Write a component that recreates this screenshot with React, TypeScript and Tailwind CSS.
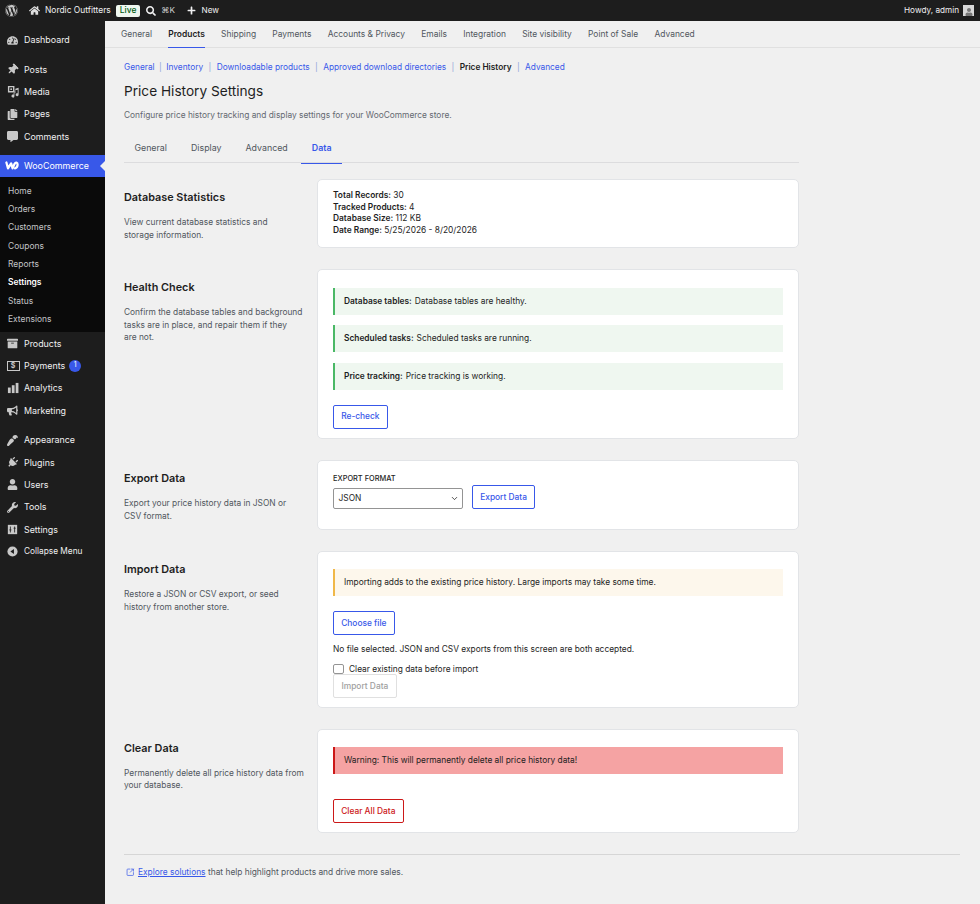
import React from 'react';
import { ChevronDown, SquareArrowOutUpRight } from 'lucide-react';
import {
  FaArchive, FaBullhorn, FaCommentAlt, FaCopy, FaHome, FaPaintBrush, FaPlug, FaPlus, FaSearch,
  FaTachometerAlt, FaThumbtack, FaUser, FaWordpress, FaWrench,
} from 'react-icons/fa';

const MediaIcon = () => (
  <svg viewBox="0 0 14 14" className="w-[13px] h-[13px]" fill="currentColor">
    <path d="M1 1h7v7H1zM2.5 2.5v4h4v-4z" fillRule="evenodd" />
    <circle cx="4.5" cy="4.5" r="1" />
    <path d="M12.5 3v7.5a1.6 1.6 0 1 1-1-1.5V5L8 6V12a1.6 1.6 0 1 1-1-1.5V9h2V4z" />
  </svg>
);

const WooIcon = () => (
  <svg viewBox="0 0 16 10" className="w-[14px] h-[9px]" fill="none" stroke="currentColor" strokeWidth="2.6" strokeLinejoin="round" strokeLinecap="round">
    <path d="M1.6 1.6 3.4 8.2 7 2.6 8.6 8.2 11 3c1-1.8 3.4-1.6 3.4.9 0 2.2-1.6 4-3 4.3" />
  </svg>
);

const PaymentsIcon = () => (
  <div className="w-[13px] h-[10px] border border-[#c8c8c8] flex items-center justify-center text-[7px] font-bold leading-none">$</div>
);

const BarsIcon = () => (
  <svg viewBox="0 0 13 13" className="w-[12px] h-[12px]" fill="currentColor">
    <rect x="1" y="6" width="3" height="6" />
    <rect x="5.2" y="3.5" width="3" height="8.5" />
    <rect x="9.4" y="1" width="3" height="11" />
  </svg>
);

const SlidersIcon = () => (
  <svg viewBox="0 0 13 13" className="w-[11px] h-[11px]">
    <rect x="1" y="1" width="11" height="11" fill="currentColor" />
    <path d="M4 3v7M2.8 7h2.4M9 3v7M7.8 5h2.4" stroke="#1d1d1d" strokeWidth="1" />
  </svg>
);

const CollapseIcon = () => (
  <svg viewBox="0 0 13 13" className="w-[11px] h-[11px]">
    <circle cx="6.5" cy="6.5" r="6" fill="currentColor" />
    <path d="M8.2 3.5v6L4 6.5z" fill="#1d1d1d" />
  </svg>
);

const MenuItem = ({ icon, label, badge, small }: { icon: React.ReactNode; label: string; badge?: boolean; small?: boolean }) => (
  <div className="h-[22.3px] flex items-center text-[#f0f0f1]">
    <span className="w-[24px] pl-[6.5px] flex items-center text-[#c8c8c8] text-[11px]">{icon}</span>
    <span className={small ? 'text-[8.3px]' : 'text-[8.9px]'}>{label}</span>
    {badge && (
      <span className="ml-[4px] w-[12px] h-[12px] rounded-full bg-[#3858e9] text-white text-[7px] flex items-center justify-center">1</span>
    )}
  </div>
);

const Section = ({ title, desc, children }: { title: string; desc: React.ReactNode; children: React.ReactNode }) => (
  <div className="flex">
    <div className="w-[193px] pt-[11.5px] pr-[8px]">
      <h2 className="text-[10.85px] leading-[14px] font-semibold text-[#1e1e1e]">{title}</h2>
      <p className="mt-[12px] text-[8.37px] leading-[12.5px] text-[#50575e]">{desc}</p>
    </div>
    <div className="w-[482px] bg-white rounded-[5px] border border-[#e2e4e7] px-[15px] pt-[9px] pb-[9px]">{children}</div>
  </div>
);

const Notice = ({ label, text }: { label: string; text: string }) => (
  <div className="h-[27px] flex items-center bg-[#eff7f0] border-l-[2.4px] border-[#4ab866] pl-[9px] text-[8.37px] text-[#1e1e1e]">
    <b className="font-semibold mr-[3px]">{label}</b>
    {text}
  </div>
);

const OutlineButton = ({ label, className }: { label: string; className: string }) => (
  <button className={`h-[24px] px-[7.2px] rounded-[2px] border border-[#3858e9] text-[#3858e9] text-[8.37px] font-medium bg-white ${className}`}>{label}</button>
);

const topTabs = ['General', 'Products', 'Shipping', 'Payments', 'Accounts & Privacy', 'Emails', 'Integration', 'Site visibility', 'Point of Sale', 'Advanced'];
const subItems = ['Home', 'Orders', 'Customers', 'Coupons', 'Reports', 'Settings', 'Status', 'Extensions'];
const subLinks = ['General', 'Inventory', 'Downloadable products', 'Approved download directories', 'Price History', 'Advanced'];

export default function App() {
  return (
    <div className="w-[980px] h-[904px] overflow-hidden bg-[#f0f0f0] flex flex-col text-[9px] font-['Inter',sans-serif]">
      <header className="h-[21px] shrink-0 bg-[#1d1d1d] text-[#f0f0f1] flex items-center text-[8.45px]">
        <FaWordpress className="ml-[5px] w-[13px] h-[13px] text-[#c8c8c8]" />
        <FaHome className="ml-[11px] w-[11px] h-[11px] text-[#e0e0e0]" />
        <span className="ml-[5px]">Nordic Outfitters</span>
        <span className="ml-[5px] h-[12px] px-[4px] flex items-center bg-[#eff7f0] text-[#005c12] rounded-[2px] font-medium">Live</span>
        <FaSearch className="ml-[6px] w-[10px] h-[10px]" />
        <span className="ml-[5px] text-[8.2px] text-[#d0d0d0]">⌘K</span>
        <FaPlus className="ml-[11.5px] w-[9px] h-[9px]" />
        <span className="ml-[6px] text-[8.2px]">New</span>
        <span className="ml-auto text-[8.2px]">Howdy, admin</span>
        <span className="ml-[4px] mr-[6px] w-[11px] h-[11px] bg-[#d8d8d8] flex items-end justify-center">
          <FaUser className="w-[8px] h-[8px] text-[#777]" />
        </span>
      </header>

      <div className="flex flex-1 min-h-0">
        <aside className="w-[105px] shrink-0 bg-[#1d1d1d]">
          <div className="pt-[8px]">
            <MenuItem icon={<FaTachometerAlt />} label="Dashboard" />
          </div>
          <div className="pt-[7px]">
            <MenuItem icon={<FaThumbtack className="rotate-45" />} label="Posts" />
            <MenuItem icon={<MediaIcon />} label="Media" />
            <MenuItem icon={<FaCopy />} label="Pages" />
            <MenuItem icon={<FaCommentAlt />} label="Comments" />
          </div>
          <div className="relative mt-[7.5px] h-[22px] bg-[#3858e9] text-white flex items-center">
            <span className="w-[24px] pl-[5px] flex items-center"><WooIcon /></span>
            <span className="text-[8.9px]">WooCommerce</span>
            <span className="absolute right-0 top-[6px] border-y-[5px] border-r-[5px] border-y-transparent border-r-[#f0f0f0]" />
          </div>
          <div className="bg-[#0a0a0a] h-[155px] pt-[4.8px] pl-[8px] text-[#c3c4c7] text-[8.45px]">
            {subItems.map((s) => (
              <div key={s} className={`h-[18.35px] flex items-center ${s === 'Settings' ? 'font-semibold text-white' : ''}`}>{s}</div>
            ))}
          </div>
          <div className="pt-[0.3px]">
            <MenuItem icon={<FaArchive />} label="Products" />
            <MenuItem icon={<PaymentsIcon />} label="Payments" badge />
            <MenuItem icon={<BarsIcon />} label="Analytics" />
            <MenuItem icon={<FaBullhorn />} label="Marketing" />
          </div>
          <div className="pt-[7.5px]">
            <MenuItem icon={<FaPaintBrush className="rotate-180" />} label="Appearance" />
            <MenuItem icon={<FaPlug className="rotate-45" />} label="Plugins" />
            <MenuItem icon={<FaUser />} label="Users" />
            <MenuItem icon={<FaWrench />} label="Tools" />
            <MenuItem icon={<SlidersIcon />} label="Settings" />
            <MenuItem icon={<CollapseIcon />} label="Collapse Menu" small />
          </div>
        </aside>

        <main className="flex-1 min-w-0">
          <nav className="h-[27px] border-b border-[#e0e0e0] pl-[16px] flex gap-[16.2px] text-[8.45px] text-[#50575e]">
            {topTabs.map((t) => (
              <span key={t} className={`flex items-center border-b-[1.6px] -mb-px ${t === 'Products' ? 'font-semibold text-[#1e1e1e] border-[#3858e9]' : 'border-transparent'}`}>{t}</span>
            ))}
          </nav>

          <div className="pl-[19px] pr-[20px]">
            <div className="mt-[13px] flex items-center h-[12px] text-[8.3px] text-[#3858e9]">
              {subLinks.map((l, i) => (
                <React.Fragment key={l}>
                  {i > 0 && <span className={`text-[#8fa3d8] ${i === 1 ? 'mx-[4.5px]' : 'mx-[5.4px]'}`}>|</span>}
                  <span className={l === 'Price History' ? 'font-semibold text-[#1e1e1e]' : ''}>{l}</span>
                </React.Fragment>
              ))}
            </div>
            <h1 className="mt-[8px] text-[13.65px] leading-[20px] text-[#1e1e1e]">Price History Settings</h1>
            <p className="mt-[8px] text-[8.37px] leading-[12px] text-[#646970]">Configure price history tracking and display settings for your WooCommerce store.</p>

            <div className="mt-[14px] w-[675px] h-[28px] border-b-[1.6px] border-[#dcdcde] flex gap-[3.2px] text-[8.85px] text-[#50575e]">
              {['General', 'Display', 'Advanced', 'Data'].map((t) => (
                <span key={t} className={`px-[10.4px] pb-[3px] flex items-center border-b-[1.6px] -mb-[1.6px] ${t === 'Data' ? 'font-semibold text-[#3858e9] border-[#3858e9]' : 'border-transparent'}`}>{t}</span>
              ))}
            </div>

            <div className="mt-[15.6px] flex flex-col gap-[20.8px]">
              <Section title="Database Statistics" desc={<>View current database statistics and<br />storage information.</>}>
                <div className="text-[8.37px] leading-[11.6px] text-[#1e1e1e] pt-[1.5px] pb-[1.5px]">
                  <div><b className="font-semibold">Total Records:</b> 30</div>
                  <div><b className="font-semibold">Tracked Products:</b> 4</div>
                  <div><b className="font-semibold">Database Size:</b> 112 KB</div>
                  <div><b className="font-semibold">Date Range:</b> 5/25/2026 - 8/20/2026</div>
                </div>
              </Section>

              <Section title="Health Check" desc={<>Confirm the database tables and background<br />tasks are in place, and repair them if they<br />are not.</>}>
                <div className="pt-[9px] flex flex-col gap-[10.5px]">
                  <Notice label="Database tables:" text="Database tables are healthy." />
                  <Notice label="Scheduled tasks:" text="Scheduled tasks are running." />
                  <Notice label="Price tracking:" text="Price tracking is working." />
                </div>
                <OutlineButton label="Re-check" className="mt-[15px] block" />
              </Section>

              <Section title="Export Data" desc={<>Export your price history data in JSON or<br />CSV format.</>}>
                <div className="flex items-start gap-[9px] pt-[4px] pb-[11px]">
                  <div>
                    <div className="text-[7.4px] leading-[10px] font-medium text-[#1e1e1e] mb-[4.5px]">EXPORT FORMAT</div>
                    <div className="w-[130px] h-[21px] border border-[#949494] rounded-[2px] flex items-center justify-between pl-[4.5px] pr-[3.5px] text-[8.37px] text-[#1e1e1e] bg-white">
                      JSON
                      <ChevronDown className="w-[9px] h-[9px]" />
                    </div>
                  </div>
                  <OutlineButton label="Export Data" className="mt-[11.5px]" />
                </div>
              </Section>

              <Section title="Import Data" desc={<>Restore a JSON or CSV export, or seed<br />history from another store.</>}>
                <div className="mt-[8px] h-[27px] flex items-center bg-[#fdf7ec] border-l-[2.4px] border-[#f0b849] pl-[9px] text-[8.37px] text-[#1e1e1e]">
                  Importing adds to the existing price history. Large imports may take some time.
                </div>
                <OutlineButton label="Choose file" className="mt-[15px] block" />
                <p className="mt-[8px] text-[8.37px] leading-[12px] text-[#1e1e1e]">No file selected. JSON and CSV exports from this screen are both accepted.</p>
                <label className="mt-[8px] flex items-center gap-[5.5px] text-[8.37px] leading-[12px] text-[#1e1e1e]">
                  <span className="w-[10.5px] h-[10.5px] border border-[#949494] rounded-[2px] bg-white" />
                  Clear existing data before import
                </label>
                <button className="-mt-[1px] mb-[0.5px] block h-[24px] px-[7.5px] rounded-[2px] border border-[#e0e0e0] text-[#a0a0a0] text-[8.37px] font-medium bg-white">Import Data</button>
              </Section>

              <Section title="Clear Data" desc={<>Permanently delete all price history data from<br />your database.</>}>
                <div className="mt-[8px] h-[27px] flex items-center bg-[#f5a3a3] border-l-[2.4px] border-[#cc1818] pl-[9px] text-[8.37px] text-[#1e1e1e]">
                  Warning: This will permanently delete all price history data!
                </div>
                <button className="mt-[25px] block h-[24px] px-[7.2px] rounded-[2px] border border-[#cc1818] text-[#cc1818] text-[8.37px] font-medium bg-white">Clear All Data</button>
              </Section>
            </div>

            <footer className="mt-[20.8px] border-t border-[#d6d6d6] pt-[11px] flex items-center text-[8.37px] text-[#50575e]">
              <SquareArrowOutUpRight className="ml-[2px] mr-[3.5px] w-[8.5px] h-[8.5px] text-[#3858e9]" />
              <span className="text-[#3858e9] underline mr-[2.5px]">Explore solutions</span>
              that help highlight products and drive more sales.
            </footer>
          </div>
        </main>
      </div>
    </div>
  );
}
